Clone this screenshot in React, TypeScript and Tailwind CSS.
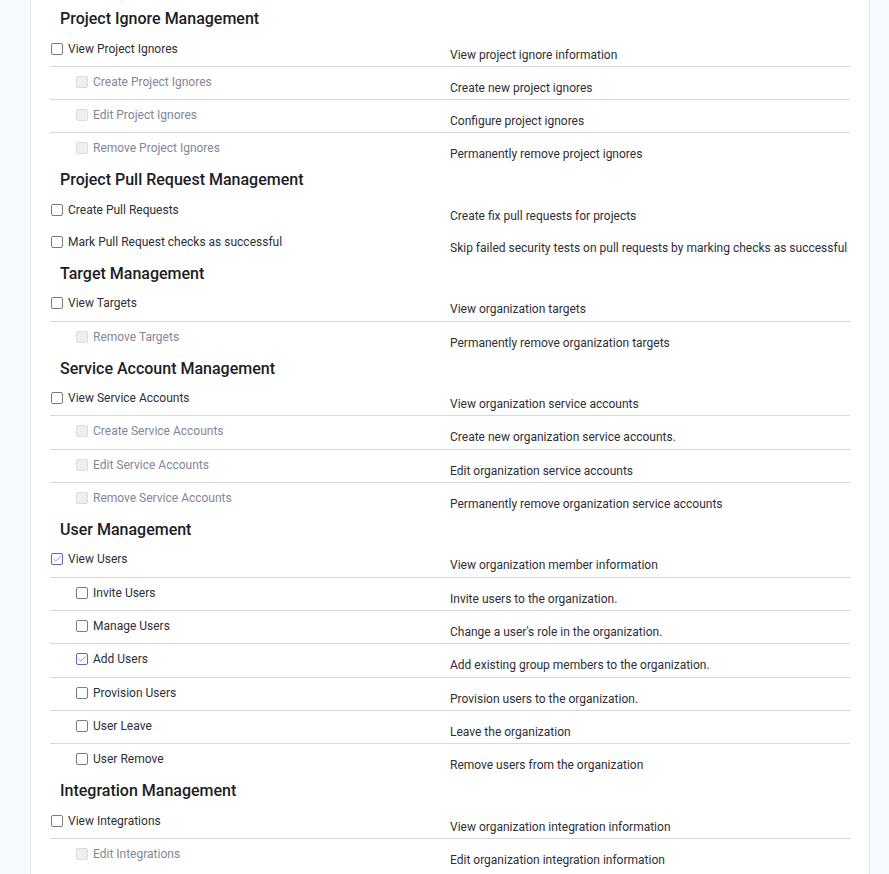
import { Check } from "lucide-react";

type Perm = {
  label: string;
  description: string;
  checked?: boolean;
  disabled?: boolean;
  children?: Perm[];
};

type Group = {
  title: string;
  items: Perm[];
};

const groups: Group[] = [
  {
    title: "Project Ignore Management",
    items: [
      {
        label: "View Project Ignores",
        description: "View project ignore information",
        children: [
          { label: "Create Project Ignores", description: "Create new project ignores", disabled: true },
          { label: "Edit Project Ignores", description: "Configure project ignores", disabled: true },
          { label: "Remove Project Ignores", description: "Permanently remove project ignores", disabled: true },
        ],
      },
    ],
  },
  {
    title: "Project Pull Request Management",
    items: [
      { label: "Create Pull Requests", description: "Create fix pull requests for projects" },
      {
        label: "Mark Pull Request checks as successful",
        description: "Skip failed security tests on pull requests by marking checks as successful",
      },
    ],
  },
  {
    title: "Target Management",
    items: [
      {
        label: "View Targets",
        description: "View organization targets",
        children: [
          { label: "Remove Targets", description: "Permanently remove organization targets", disabled: true },
        ],
      },
    ],
  },
  {
    title: "Service Account Management",
    items: [
      {
        label: "View Service Accounts",
        description: "View organization service accounts",
        children: [
          { label: "Create Service Accounts", description: "Create new organization service accounts.", disabled: true },
          { label: "Edit Service Accounts", description: "Edit organization service accounts", disabled: true },
          { label: "Remove Service Accounts", description: "Permanently remove organization service accounts", disabled: true },
        ],
      },
    ],
  },
  {
    title: "User Management",
    items: [
      {
        label: "View Users",
        description: "View organization member information",
        checked: true,
        children: [
          { label: "Invite Users", description: "Invite users to the organization." },
          { label: "Manage Users", description: "Change a user's role in the organization." },
          { label: "Add Users", description: "Add existing group members to the organization.", checked: true },
          { label: "Provision Users", description: "Provision users to the organization." },
          { label: "User Leave", description: "Leave the organization" },
          { label: "User Remove", description: "Remove users from the organization" },
        ],
      },
    ],
  },
  {
    title: "Integration Management",
    items: [
      {
        label: "View Integrations",
        description: "View organization integration information",
        children: [
          { label: "Edit Integrations", description: "Edit organization integration information", disabled: true },
        ],
      },
    ],
  },
];

function Box({ checked, disabled }: { checked?: boolean; disabled?: boolean }) {
  if (checked) {
    return (
      <span className="mt-[2px] w-[12px] h-[12px] shrink-0 rounded-[2px] border border-[#6a5dc4] bg-white flex items-center justify-center text-[#6a5dc4]">
        <Check size={10} strokeWidth={1.6} />
      </span>
    );
  }
  if (disabled) {
    return <span className="mt-[2px] block w-[12px] h-[12px] shrink-0 rounded-[2px] border border-[#dcdce0] bg-[#efeff1]" />;
  }
  return <span className="mt-[2px] block w-[12px] h-[12px] shrink-0 rounded-[2px] border border-[#7a7a82] bg-white" />;
}

function Row({ perm, child }: { perm: Perm; child?: boolean }) {
  return (
    <div
      className={
        child
          ? "grid grid-cols-2 h-[33.33px] border-t border-[#d6d6dc]"
          : "grid grid-cols-2 h-[32.33px]"
      }
    >
      <div className={child ? "flex items-start gap-[5px] pl-[26px] pt-[7px]" : "flex items-start gap-[5px] pl-[1px] pt-[7px]"}>
        <Box checked={perm.checked} disabled={perm.disabled} />
        <span
          className={
            perm.disabled
              ? "text-[12px] leading-[16px] text-[#85859a]"
              : "text-[12px] leading-[16px] text-[#2e2e38]"
          }
        >
          {perm.label}
        </span>
      </div>
      <div className="pt-[13px] text-[12px] leading-[16px] text-[#2e2e38] whitespace-nowrap">
        {perm.description}
      </div>
    </div>
  );
}

export default function App() {
  return (
    <div className="min-h-screen bg-[#f6f9fd] pl-[30px] pr-[19px]" style={{ fontFamily: "Roboto, 'Noto Sans', sans-serif" }}>
      <div className="h-[874px] overflow-hidden bg-white border-x border-[#e3e6ec] px-[19px]">
        <div className="-mt-[28.83px]">
          {/* tail of the section above, scrolled out of view */}
          <div className="grid grid-cols-2 h-[33.33px] border-t border-[#d6d6dc]">
            <div />
            <div className="pt-[11px] text-[12px] leading-[16px] text-[#2e2e38] whitespace-nowrap">
              Permanently remove projects
            </div>
          </div>
          {groups.map((g) => (
            <section key={g.title}>
              <h2 className="h-[29px] flex items-center pl-[10px] text-[16px] font-medium text-[#1c1c24]">
                {g.title}
              </h2>
              {g.items.map((item) => (
                <div key={item.label}>
                  <Row perm={item} />
                  {item.children?.map((c) => (
                    <Row key={c.label} perm={c} child />
                  ))}
                </div>
              ))}
            </section>
          ))}
        </div>
      </div>
    </div>
  );
}
